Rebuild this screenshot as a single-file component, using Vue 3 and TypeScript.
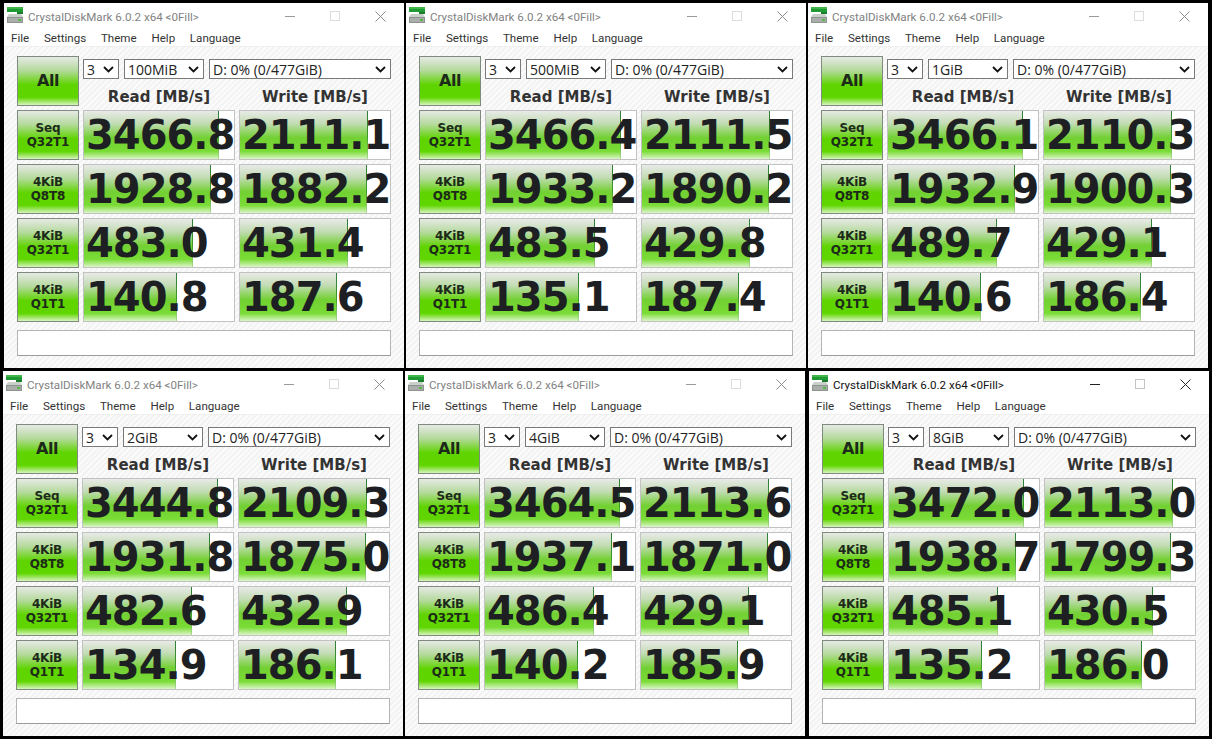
<script setup lang="ts">
interface Win {
  size: string
  active?: boolean
  scores: [string, string][]
}

const labels = [
  ['Seq', 'Q32T1'],
  ['4KiB', 'Q8T8'],
  ['4KiB', 'Q32T1'],
  ['4KiB', 'Q1T1'],
]

const menu = ['File', 'Settings', 'Theme', 'Help', 'Language']

const topRow: Win[] = [
  { size: '100MiB', scores: [['3466.8', '2111.1'], ['1928.8', '1882.2'], ['483.0', '431.4'], ['140.8', '187.6']] },
  { size: '500MiB', scores: [['3466.4', '2111.5'], ['1933.2', '1890.2'], ['483.5', '429.8'], ['135.1', '187.4']] },
  { size: '1GiB', scores: [['3466.1', '2110.3'], ['1932.9', '1900.3'], ['489.7', '429.1'], ['140.6', '186.4']] },
]

const bottomRow: Win[] = [
  { size: '2GiB', scores: [['3444.8', '2109.3'], ['1931.8', '1875.0'], ['482.6', '432.9'], ['134.9', '186.1']] },
  { size: '4GiB', scores: [['3464.5', '2113.6'], ['1937.1', '1871.0'], ['486.4', '429.1'], ['140.2', '185.9']] },
  { size: '8GiB', active: true, scores: [['3472.0', '2113.0'], ['1938.7', '1799.3'], ['485.1', '430.5'], ['135.2', '186.0']] },
]

const rows = [topRow, bottomRow]

function meter(score: string) {
  const ratio = 0.2 * Math.log10(parseFloat(score) * 10) - 0.009
  return Math.round(ratio * 100 * 10) / 10 + '%'
}
</script>

<template>
  <div class="desk">
    <div v-for="(row, r) in rows" :key="r" class="row" :class="{ lower: r === 1 }">
      <section v-for="win in row" :key="win.size" class="window" :class="{ active: win.active }">
        <header class="titlebar">
          <svg class="app-icon" width="18" height="18" viewBox="0 0 18 18">
            <rect x="0" y="0" width="16" height="2" fill="#3fb54a" />
            <rect x="0" y="2" width="16" height="3" fill="#1f9a35" />
            <rect x="10" y="5" width="6" height="2" fill="#1a7d2c" />
            <path d="M2 7h12l2 3H0z" fill="#c9cfc9" />
            <rect x="0" y="10" width="16" height="6" fill="#8d938f" />
            <rect x="1" y="11" width="14" height="4" fill="#a9aeab" />
            <rect x="11" y="12" width="3" height="2" fill="#58b848" />
          </svg>
          <span class="title">CrystalDiskMark 6.0.2 x64 &lt;0Fill&gt;</span>
          <svg class="controls" width="101" height="11" viewBox="0 0 101 11">
            <path class="ctl-min" d="M0 5.5h10" />
            <rect class="ctl-max" x="45.5" y="0.5" width="9" height="9" />
            <path class="ctl-close" d="M90.5 0.5l10 10M100.5 0.5l-10 10" />
          </svg>
        </header>
        <nav class="menu">
          <span v-for="item in menu" :key="item">{{ item }}</span>
        </nav>
        <div class="client">
          <button class="tile all">All</button>
          <div class="head">
            <div class="combos">
              <div class="combo count">
                <span>3</span>
                <svg width="11" height="7" viewBox="0 0 11 7"><path d="M1 1l4.5 4.5L10 1" /></svg>
              </div>
              <div class="combo size">
                <span>{{ win.size }}</span>
                <svg width="11" height="7" viewBox="0 0 11 7"><path d="M1 1l4.5 4.5L10 1" /></svg>
              </div>
              <div class="combo drive">
                <span>D: 0% (0/477GiB)</span>
                <svg width="11" height="7" viewBox="0 0 11 7"><path d="M1 1l4.5 4.5L10 1" /></svg>
              </div>
            </div>
            <div class="headings">
              <span>Read [MB/s]</span>
              <span>Write [MB/s]</span>
            </div>
          </div>
          <template v-for="(pair, i) in win.scores" :key="i">
            <button class="tile">{{ labels[i][0] }}<br />{{ labels[i][1] }}</button>
            <div v-for="score in pair" :key="score" class="cell">
              <div class="bar" :style="{ width: meter(score) }"></div>
              <span class="score">{{ score }}</span>
            </div>
          </template>
          <div class="comment"></div>
        </div>
      </section>
    </div>
  </div>
</template>

<style scoped>
.desk {
  width: 1212px;
  height: 739px;
  background: #000;
  display: flex;
  flex-direction: column;
  gap: 3px;
  padding-top: 3px;
  box-sizing: border-box;
  overflow: hidden;
}

.row {
  display: flex;
  gap: 2px;
  padding-left: 4px;
}

.row.lower {
  padding-left: 3px;
}

.row.lower .window:last-child {
  margin-left: 2px;
}

.window {
  width: 400px;
  height: 365px;
  background: #fff;
  display: flex;
  flex-direction: column;
  font-family: Roboto, "Open Sans", sans-serif;
}

.titlebar {
  height: 27px;
  display: flex;
  align-items: center;
  padding-left: 3px;
  flex: none;
}

.app-icon {
  flex: none;
  margin-top: -1px;
}

.title {
  margin-left: 3px;
  font-size: 11.6px;
  color: #828282;
  white-space: nowrap;
}

.controls {
  margin-left: auto;
  margin-right: 18px;
  margin-top: -1px;
  fill: none;
}

.ctl-min {
  stroke: #9a9a9a;
}

.ctl-max {
  stroke: #dcdcdc;
}

.ctl-close {
  stroke: #8c8c8c;
}

.active .title {
  color: #111;
}

.active .ctl-min,
.active .ctl-close {
  stroke: #222;
}

.active .ctl-max {
  stroke: #c4c4c4;
}

.menu {
  height: 17px;
  flex: none;
  display: flex;
  gap: 14.7px;
  padding-left: 7px;
  font-size: 11.6px;
  line-height: 17px;
  color: #333;
  border-bottom: 1px solid #efefef;
  box-sizing: border-box;
}

.client {
  flex: 1;
  display: grid;
  grid-template-columns: 62px 152px 152px;
  grid-template-rows: 50px repeat(4, 50px) 30px;
  gap: 4px;
  padding: 9px 13px 8px;
  align-content: start;
  background: repeating-linear-gradient(135deg, #fbfbfb 0 2px, #f3f3f3 2px 4px);
}

.tile {
  margin: 0;
  padding: 0;
  border: 1px solid #7f8b7f;
  background: linear-gradient(#e6e9e4 0%, #b4da9c 28%, #5fd400 58%, #60d600 84%, #d6f4bc 100%);
  font-family: "DejaVu Sans", sans-serif;
  font-weight: 700;
  font-size: 12px;
  letter-spacing: -0.2px;
  line-height: 14px;
  color: #1d2a1a;
}

.tile.all {
  font-size: 16px;
  letter-spacing: -0.5px;
}

.head {
  grid-column: 2 / 4;
}

.combos {
  display: flex;
  gap: 5px;
  margin-top: 3px;
}

.combo {
  height: 20px;
  box-sizing: border-box;
  border: 1px solid #7a7a7a;
  background: #fff;
  display: flex;
  align-items: center;
  justify-content: space-between;
  padding: 0 4px 0 3px;
  font-family: "Open Sans", sans-serif;
  font-size: 14px;
  color: #222;
}

.combo svg {
  fill: none;
  stroke: #111;
  stroke-width: 1.8;
  flex: none;
}

.combo.count {
  width: 36px;
}

.combo.size {
  width: 80px;
}

.combo.drive {
  width: 182px;
}

.headings {
  display: grid;
  grid-template-columns: 152px 152px;
  gap: 4px;
  margin-top: 8px;
  font-family: "DejaVu Sans", sans-serif;
  font-weight: 700;
  font-size: 15px;
  line-height: 20px;
  color: #333;
  text-align: center;
}

.cell {
  position: relative;
  box-sizing: border-box;
  border: 1px solid #c2c2c2;
  background: #fff;
  display: flex;
  align-items: center;
  padding-left: 2px;
}

.bar {
  position: absolute;
  left: 0;
  top: 0;
  bottom: 0;
  box-sizing: border-box;
  background: linear-gradient(#e8eae6 0%, #c2dcb4 26%, #72d032 56%, #7adc36 84%, #dcf5c8 100%);
  border-right: 1px solid;
  border-image: linear-gradient(#2f7a3a, #3f9a2a 55%, #b0e090) 1;
}

.score {
  position: relative;
  font-family: "DejaVu Sans", sans-serif;
  font-weight: 700;
  font-size: 40px;
  letter-spacing: -1px;
  line-height: 48px;
  color: #1d1f22;
  white-space: nowrap;
}

.comment {
  grid-column: 1 / 4;
  margin-top: 4px;
  background: #fff;
  border: 1px solid #b4b4b4;
  border-bottom-color: #9c9c9c;
}
</style>
